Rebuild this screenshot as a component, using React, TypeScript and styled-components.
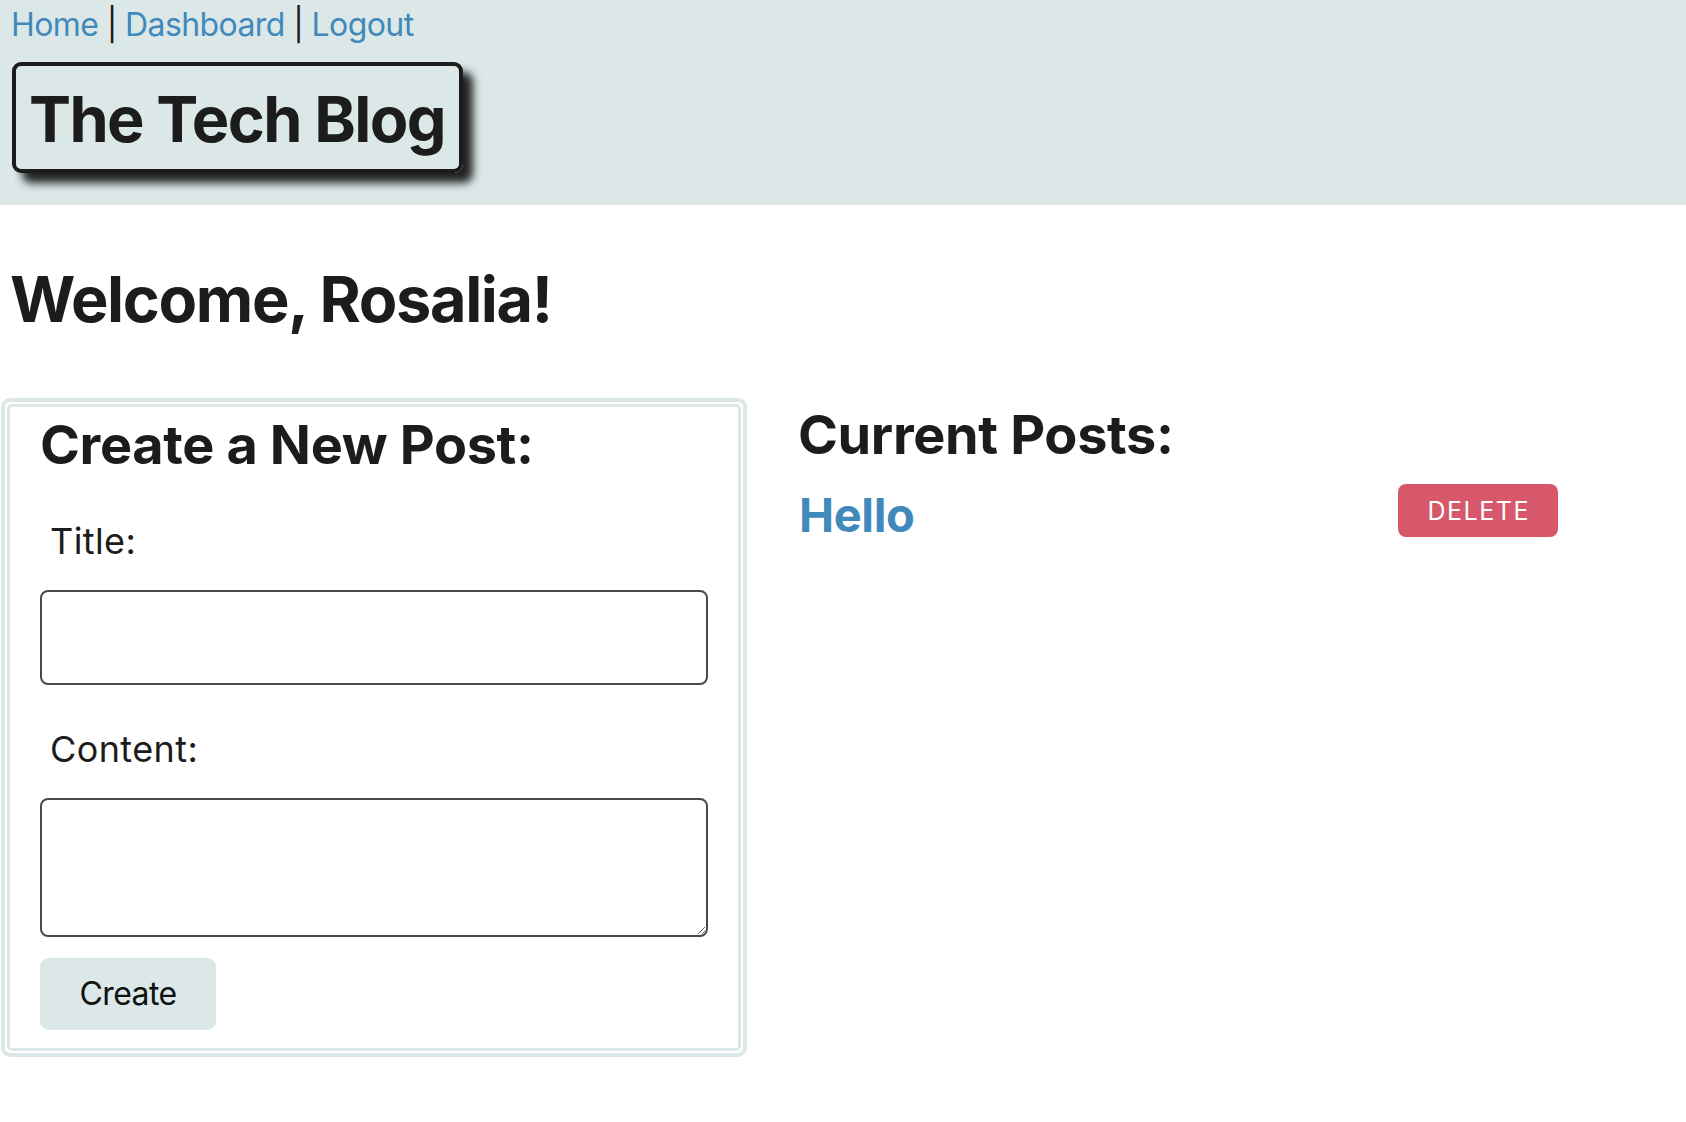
import React from "react";
import styled, { createGlobalStyle } from "styled-components";

const GlobalStyle = createGlobalStyle`
  html, body { margin: 0; padding: 0; background: #ffffff; }
  body {
    font-family: "Inter", "Helvetica Neue", Arial, sans-serif;
    color: #1c1c1c;
  }
  * { box-sizing: border-box; }
`;

const Header = styled.header`
  background: #dce8e8;
  height: 205px;
  padding: 6px 0 0 12px;
  display: flex;
  flex-direction: column;
  align-items: flex-start;
`;

const Nav = styled.nav`
  font-size: 32px;
  line-height: 38px;
  letter-spacing: -0.6px;
  margin-left: -1px;
  color: #1c1c1c;
  white-space: pre;
`;

const NavLink = styled.a`
  color: #4289bb;
  text-decoration: none;
`;

const TitleBox = styled.div`
  margin-top: 18px;
  border: 4px solid #1c1c1c;
  border-radius: 9px;
  padding: 15px 14px 12px 13px;
  box-shadow: 10px 10px 8px rgba(0, 0, 0, 0.85);
`;

const SiteTitle = styled.h1`
  margin: 0;
  font-size: 63px;
  line-height: 76px;
  font-weight: 700;
  letter-spacing: -1.6px;
`;

const Main = styled.main`
  display: flex;
  flex-direction: column;
`;

const Welcome = styled.h1`
  margin: 56px 0 61px 10px;
  font-size: 63px;
  line-height: 76px;
  font-weight: 700;
  letter-spacing: -1.35px;
`;

const Columns = styled.div`
  display: flex;
  align-items: flex-start;
  padding-left: 1px;
`;

const CardFrame = styled.section`
  width: 746px;
  border: 4px solid #dce8e8;
  border-radius: 9px;
  padding: 2px;
`;

const Card = styled.div`
  border: 3px solid #dce8e8;
  border-radius: 5px;
  padding: 4.6px 30px 18px 30px;
  display: flex;
  flex-direction: column;
  align-items: flex-start;
`;

const SectionTitle = styled.h2<{ $top?: number }>`
  margin: ${(p) => p.$top ?? 0}px 0 0 0;
  font-size: 54px;
  line-height: 65px;
  font-weight: 700;
  letter-spacing: -0.35px;
`;

const Field = styled.div<{ $top: number }>`
  margin-top: ${(p) => p.$top}px;
  width: 100%;
  display: flex;
  flex-direction: column;
`;

const Label = styled.label`
  margin-left: 10px;
  margin-bottom: 28px;
  font-size: 36px;
  line-height: 41px;
  letter-spacing: 0.4px;
`;

const TextInput = styled.input`
  width: 100%;
  height: 95px;
  border: 2px solid #4a4a4a;
  border-radius: 8px;
  background: #fff;
  font: inherit;
  font-size: 32px;
  padding: 0 12px;
`;

const TextArea = styled.textarea`
  width: 100%;
  height: 139.4px;
  border: 2px solid #4a4a4a;
  border-radius: 8px;
  background: #fff;
  font: inherit;
  font-size: 32px;
  padding: 8px 12px;
  display: block;
`;

const CreateButton = styled.button`
  margin-top: 20.6px;
  width: 176px;
  height: 72px;
  border: none;
  border-radius: 9px;
  background: #dce8e8;
  color: #111;
  font-family: inherit;
  font-size: 32px;
  letter-spacing: -0.6px;
`;

const PostsColumn = styled.section`
  margin-left: 51px;
  width: 760px;
  display: flex;
  flex-direction: column;
`;

const PostRow = styled.div`
  margin-top: 17px;
  display: flex;
  justify-content: space-between;
  align-items: flex-start;
`;

const PostTitle = styled.a`
  margin-top: 2px;
  margin-left: 1px;
  font-size: 47px;
  line-height: 57px;
  font-weight: 700;
  letter-spacing: -0.4px;
  color: #4289bb;
  text-decoration: none;
`;

const DeleteButton = styled.button`
  width: 160px;
  height: 53px;
  border: none;
  border-radius: 8px;
  background: #d6586a;
  color: #fff;
  font-family: inherit;
  font-size: 25px;
  letter-spacing: 1.5px;
  padding: 0 0 0 1.5px;
`;

export default function App() {
  return (
    <>
      <GlobalStyle />
      <Header>
        <Nav>
          <NavLink href="#">Home</NavLink>
          {" | "}
          <NavLink href="#">Dashboard</NavLink>
          {" | "}
          <NavLink href="#">Logout</NavLink>
        </Nav>
        <TitleBox>
          <SiteTitle>The Tech Blog</SiteTitle>
        </TitleBox>
      </Header>
      <Main>
        <Welcome>Welcome, Rosalia!</Welcome>
        <Columns>
          <CardFrame>
            <Card>
              <SectionTitle>Create a New Post:</SectionTitle>
              <Field $top={44.6}>
                <Label htmlFor="post-title">Title:</Label>
                <TextInput id="post-title" type="text" />
              </Field>
              <Field $top={43.7}>
                <Label htmlFor="post-content">Content:</Label>
                <TextArea id="post-content" />
              </Field>
              <CreateButton type="button">Create</CreateButton>
            </Card>
          </CardFrame>
          <PostsColumn>
            <SectionTitle $top={4}>Current Posts:</SectionTitle>
            <PostRow>
              <PostTitle href="#">Hello</PostTitle>
              <DeleteButton type="button">DELETE</DeleteButton>
            </PostRow>
          </PostsColumn>
        </Columns>
      </Main>
    </>
  );
}
